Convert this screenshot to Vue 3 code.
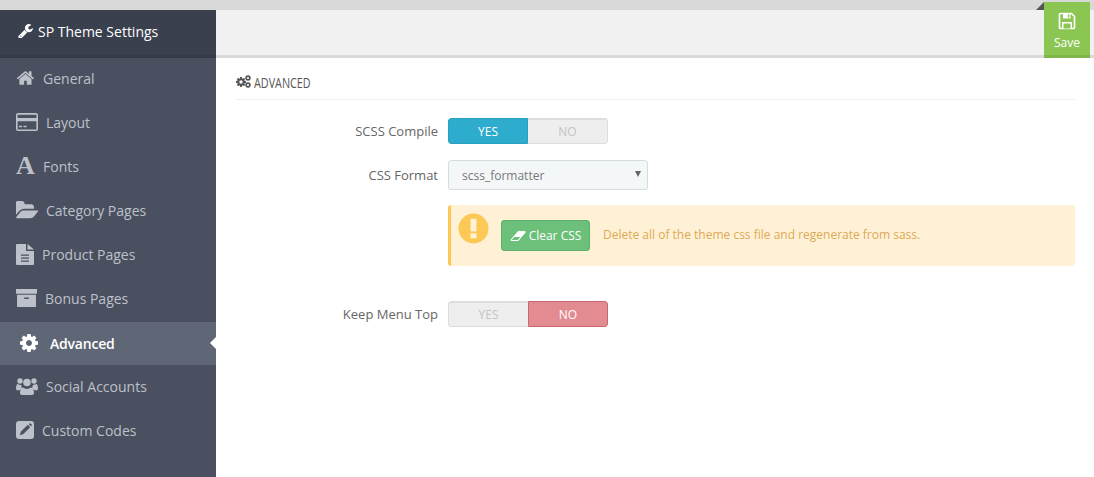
<script setup>
const items = [
  { label: 'General', icon: 'home', w: 19, gap: 8 },
  { label: 'Layout', icon: 'card', w: 22, gap: 8 },
  { label: 'Fonts', icon: 'font', w: 19, gap: 8 },
  { label: 'Category Pages', icon: 'folder', w: 22, gap: 8 },
  { label: 'Product Pages', icon: 'file', w: 18, gap: 8 },
  { label: 'Bonus Pages', icon: 'archive', w: 21, gap: 8 },
  { label: 'Advanced', icon: 'cog', w: 18, gap: 12, active: true, vb: '128 128 1536 1536' },
  { label: 'Social Accounts', icon: 'users', w: 22, gap: 8 },
  { label: 'Custom Codes', icon: 'pencil', w: 18, gap: 8 }
]
const cog = 'M1152 896q0-106-75-181t-181-75-181 75-75 181 75 181 181 75 181-75 75-181zm512-109v222q0 12-8 23t-20 13l-185 28q-19 54-39 91 35 50 107 138 10 12 10 25t-9 23q-27 37-99 108t-94 71q-12 0-26-9l-138-108q-44 23-91 38-16 136-29 186-7 28-36 28h-222q-14 0-24.5-8.5t-11.5-21.5l-28-184q-49-16-90-37l-141 107q-10 9-25 9-14 0-25-11-126-114-165-168-7-10-7-23 0-12 8-23 15-21 51-66.5t54-70.5q-27-50-41-99l-183-27q-13-2-21-12.5t-8-23.5v-222q0-12 8-23t19-13l186-28q14-46 39-92-40-57-107-138-10-12-10-24 0-10 9-23 26-36 98.5-107.5t94.5-71.5q13 0 26 10l138 107q44-23 91-38 16-136 29-186 7-28 36-28h222q14 0 24.5 8.5t11.5 21.5l28 184q49 16 90 37l142-107q9-9 24-9 13 0 25 10 129 119 165 170 7 8 7 22 0 12-8 23-15 21-51 66.5t-54 70.5q26 50 41 98l183 28q13 2 21 12.5t8 23.5z'
const paths = {
  home: 'M1472 992v480q0 26-19 45t-45 19h-384v-384h-256v384h-384q-26 0-45-19t-19-45v-480q0-1 .5-3t.5-3l575-474 575 474q1 2 1 6zm223-69l-62 74q-8 9-21 11h-3q-13 0-21-7l-692-577-692 577q-12 8-24 7-13-2-21-11l-62-74q-8-10-7-23.5t11-21.5l719-599q32-26 76-26t76 26l244 204v-195q0-14 9-23t23-9h192q14 0 23 9t9 23v408l219 182q10 8 11 21.5t-7 23.5z',
  folder: 'M1815 952q0 31-31 66l-336 396q-43 51-120.5 86.5t-143.5 35.5h-1088q-34 0-60.5-13t-26.5-43q0-31 31-66l336-396q43-51 120.5-86.5t143.5-35.5h1088q34 0 60.5 13t26.5 43zm-343-344v160h-832q-94 0-197 47.5t-164 119.5l-337 396-5 6q0-4-.5-12.5t-.5-12.5v-960q0-92 66-158t158-66h320q92 0 158 66t66 158v32h544q92 0 158 66t66 158z',
  cog
}
const wrench = 'M448 1472q0-26-19-45t-45-19-45 19-19 45 19 45 45 19 45-19 19-45zm644-420l-682 682q-37 37-90 37-52 0-91-37l-106-108q-38-36-38-90 0-53 38-91l681-681q39 98 114.5 173.5t173.5 114.5zm634-435q0 39-23 106-47 134-164.5 217.5t-258.5 83.5q-185 0-316.5-131.5t-131.5-316.5 131.5-316.5 316.5-131.5q58 0 121.5 16.5t107.5 46.5q16 11 16 28t-16 28l-293 169v224l193 107q5-3 79-48.5t135.5-81 70.5-35.5q15 0 23.5 10t8.500 25z'
const eraser = 'M960 1408l336-384h-768l-336 384h768zm1013-1077q15 34 9.5 71.5t-30.5 65.5l-896 1024q-38 44-96 44h-768q-38 0-69.5-20.5t-47.5-54.5q-15-34-9.5-71.5t30.5-65.5l896-1024q38-44 96-44h768q38 0 70 20.5t47 54.5z'
</script>

<template>
  <div class="page">
    <aside class="sidebar">
      <div class="brand">
        <svg class="wrench" viewBox="64 128 1664 1536"><path :d="wrench" fill="currentColor" /></svg>
        <span>SP Theme Settings</span>
      </div>
      <nav class="menu">
        <a v-for="item in items" :key="item.label" class="item" :class="{ active: item.active }">
          <span class="ico" :style="{ width: item.w + 'px', marginRight: item.gap + 'px' }">
            <svg v-if="paths[item.icon]" :viewBox="item.vb || '0 128 1800 1536'" class="fa"><path :d="paths[item.icon]" fill="currentColor" /></svg>
            <svg v-else-if="item.icon === 'users'" viewBox="0 0 22 17" class="fa">
              <g fill="currentColor">
                <circle cx="4" cy="3" r="2.700" />
                <circle cx="18" cy="3" r="2.700" />
                <circle cx="11" cy="4.500" r="3.800" />
                <path d="M0 11c0-3 .6-5 1.800-5 .8.500 1.700 1 3.500.9-.2 1.500.4 2.600 1.200 3.500-1.300.3-2.200 1-2.900 1.900H1.800C.8 12.300 0 12 0 11zM22 11c0-3-.6-5-1.800-5-.8.500-1.700 1-3.500.9.2 1.500-.4 2.600-1.200 3.500 1.300.3 2.200 1 2.900 1.900h1.800c1 0 1.800-.3 1.800-1.300z" />
                <path d="M7.300 9.600c1 .8 2.200 1.300 3.700 1.300s2.700-.5 3.700-1.300c2.300 0 3.300 3 3.300 5.400 0 1.300-.9 2-2.200 2H6.200C4.900 17 4 16.300 4 15c0-2.400 1-5.400 3.300-5.400z" />
              </g>
            </svg>
            <svg v-else-if="item.icon === 'card'" viewBox="0 0 22 18" class="fa">
              <path fill-rule="evenodd" fill="currentColor" d="M2 0h18a2 2 0 0 1 2 2v14a2 2 0 0 1-2 2H2a2 2 0 0 1-2-2V2a2 2 0 0 1 2-2zm-.4 1.800v3.200h18.800V1.800zm0 6.400v8.200h18.800V8.200zM3 12.800h3v1.400H3zm4.500 0h3v1.400h-3z" />
            </svg>
            <span v-else-if="item.icon === 'font'" class="a-glyph">A</span>
            <svg v-else-if="item.icon === 'file'" viewBox="0 0 18 21" class="fa">
              <path fill-rule="evenodd" fill="currentColor" d="M1 0h9v7h8v13a1 1 0 0 1-1 1H1a1 1 0 0 1-1-1V1a1 1 0 0 1 1-1zM5 10.500v1.300h8v-1.300zm0 3v1.300h8v-1.300zm0 3v1.300h8v-1.300zM11.500 0 18 5.600h-6.500z" />
            </svg>
            <svg v-else-if="item.icon === 'archive'" viewBox="0 0 20 18" class="fa">
              <path fill-rule="evenodd" fill="currentColor" d="M0 0h20v4.500H0zM1 5.500h18V17a1 1 0 0 1-1 1H2a1 1 0 0 1-1-1zM7.800 8v1.500h4.400V8z" />
            </svg>
            <svg v-else viewBox="0 0 18 18" class="fa">
              <path fill-rule="evenodd" fill="currentColor" d="M3 0h12a3 3 0 0 1 3 3v12a3 3 0 0 1-3 3H3a3 3 0 0 1-3-3V3a3 3 0 0 1 3-3zm8.800 3.800L5 10.600l-1.300 3.700 3.700-1.300 6.800-6.800zm1-.5 2 2 .9-.9a.6.6 0 0 0 0-.9l-1.100-1.100a.6.6 0 0 0-.9 0z" />
            </svg>
          </span>
          <span>{{ item.label }}</span>
        </a>
      </nav>
    </aside>

    <main class="main">
      <div class="toolbar">
        <button class="save">
          <svg viewBox="0 0 18 18" class="save-ico">
            <path fill="none" stroke="currentColor" stroke-width="1.700" d="M1.500 2.500a1 1 0 0 1 1-1h11l3 3v11a1 1 0 0 1-1 1h-13a1 1 0 0 1-1-1z" />
            <path fill="currentColor" d="M5 1.500h7.500v5H5zM4 10h10v6.500H4z" />
            <path fill="#8bc653" d="M5.500 11.500h7v5h-7zM9.800 2.500h1.500v3H9.800z" />
          </svg>
          <span>Save</span>
          <i class="fold"></i>
        </button>
      </div>

      <section class="content">
        <h3 class="title">
          <span class="cogs">
            <svg class="cog-big" viewBox="128 128 1536 1536"><path :d="cog" fill="currentColor" /></svg>
            <svg class="cog-s1" viewBox="128 128 1536 1536"><path :d="cog" fill="currentColor" /></svg>
            <svg class="cog-s2" viewBox="128 128 1536 1536"><path :d="cog" fill="currentColor" /></svg>
          </span>
          <span class="title-text">ADVANCED</span>
        </h3>

        <div class="row first">
          <label class="lbl">SCSS Compile</label>
          <div class="switch">
            <span class="opt on-yes">YES</span>
            <span class="opt off">NO</span>
          </div>
        </div>

        <div class="row second">
          <label class="lbl">CSS Format</label>
          <div class="select">
            <span>scss_formatter</span>
            <i class="caret"></i>
          </div>
        </div>

        <div class="alert">
          <svg class="warn" viewBox="0 0 32 32">
            <circle cx="16" cy="16" r="15.500" fill="#fdc956" />
            <rect x="13" y="6" width="6" height="13" fill="#fff2d9" />
            <rect x="13" y="21" width="6" height="5" fill="#fff2d9" />
          </svg>
          <button class="clear">
            <svg class="eraser" viewBox="0 128 2000 1536"><path :d="eraser" fill="currentColor" /></svg>
            <span>Clear CSS</span>
          </button>
          <span class="alert-text">Delete all of the theme css file and regenerate from sass.</span>
        </div>

        <div class="row third">
          <label class="lbl">Keep Menu Top</label>
          <div class="switch">
            <span class="opt off">YES</span>
            <span class="opt on-no">NO</span>
          </div>
        </div>
      </section>
    </main>
  </div>
</template>

<style>
html, body { margin: 0; background: #fff; overflow: hidden; }
</style>

<style scoped>
.page {
  display: flex;
  height: 477px;
  width: 1094px;
  padding-top: 10px;
  box-sizing: border-box;
  background: linear-gradient(#d9d9d9 10px, #fff 10px);
  font-family: "Open Sans", sans-serif;
  overflow: hidden;
}
.sidebar { width: 216px; flex: none; background: #4a5060; display: flex; flex-direction: column; }
.brand {
  height: 48px;
  box-sizing: border-box;
  background: #3a404e;
  border-bottom: 3px solid #363b48;
  color: #fff;
  font-size: 14px;
  font-weight: 400;
  display: flex;
  align-items: center;
  padding: 0 0 3px 18px;
}
.wrench { width: 15px; height: 14px; margin-right: 5px; }
.menu { display: flex; flex-direction: column; margin-top: -1px; }
.item {
  height: 44px;
  box-sizing: border-box;
  display: flex;
  align-items: center;
  padding: 0 0 2px 16px;
  color: #bdc1c9;
  font-size: 14px;
  position: relative;
}
.item.active {
  height: 43px;
  margin-top: 1px;
  padding: 0 0 1px 20px;
  background: #5f6676;
  color: #fff;
  font-weight: 600;
  letter-spacing: -0.2px;
}
.item.active::after {
  content: "";
  position: absolute;
  right: 0;
  top: 15px;
  border: 6px solid transparent;
  border-left: 0;
  border-right-color: #fff;
}
.ico { display: inline-flex; justify-content: center; align-items: center; height: 22px; flex: none; }
.fa { width: 100%; max-height: 21px; display: block; }
.a-glyph { font: 700 26px/22px "Liberation Serif", serif; }

.main { flex: 1; min-width: 0; display: flex; flex-direction: column; }
.toolbar { height: 48px; box-sizing: border-box; background: #f1f1f1; border-bottom: 3px solid #d9d9d9; position: relative; flex: none; }
.save {
  position: absolute;
  left: 828px;
  top: -8px;
  width: 46px;
  height: 56px;
  box-sizing: border-box;
  border: 0;
  border-bottom: 3px solid #7fb54b;
  background: #8bc653;
  color: #fff;
  font: 400 12px/16px "Open Sans", sans-serif;
  padding: 10px 0 0;
  display: flex;
  flex-direction: column;
  align-items: center;
  gap: 5px;
}
.save-ico { width: 18px; height: 18px; }
.fold {
  position: absolute;
  left: -8px;
  top: 0;
  border-style: solid;
  border-width: 0 0 8px 8px;
  border-color: transparent transparent #555 transparent;
}

.content { padding: 0 19px 0 20px; }
.title {
  margin: 0;
  height: 42px;
  box-sizing: border-box;
  border-bottom: 1px solid #eee;
  display: flex;
  align-items: center;
  color: #555;
  font-weight: 400;
  font-size: 15px;
  padding-top: 6px;
}
.cogs { position: relative; width: 15px; height: 13px; margin-right: 3px; flex: none; }
.cog-big { position: absolute; left: 0; top: 2px; width: 10px; height: 10px; }
.cog-s1 { position: absolute; left: 9px; top: 0; width: 6px; height: 6px; }
.cog-s2 { position: absolute; left: 9px; top: 7px; width: 6px; height: 6px; }
.title-text { display: inline-block; transform: scaleX(0.72); transform-origin: left center; white-space: nowrap; }

.row { display: flex; align-items: center; }
.first { margin-top: 18px; }
.second { margin-top: 16px; }
.third { margin-top: 35px; }
.lbl {
  width: 212px;
  padding-right: 10px;
  box-sizing: border-box;
  text-align: right;
  font-size: 13px;
  color: #666;
  flex: none;
}
.switch { display: flex; width: 160px; height: 26px; border-radius: 3px; overflow: hidden; flex: none; }
.opt {
  width: 80px;
  box-sizing: border-box;
  display: flex;
  align-items: center;
  justify-content: center;
  font-size: 12px;
}
.off { background: #eee; color: #c4c4c4; border: 1px solid #ddd; border-top-width: 2px; }
.off:first-child { border-right: 0; border-radius: 3px 0 0 3px; }
.off:last-child { border-left: 0; border-radius: 0 3px 3px 0; }
.on-yes { background: #2eacce; color: #fff; font-weight: 500; border: 1px solid #2aa0c0; border-radius: 3px 0 0 3px; }
.on-no { background: #e28b91; color: #fff; font-weight: 500; border: 1px solid #c8656d; border-radius: 0 3px 3px 0; }

.select {
  width: 200px;
  height: 30px;
  box-sizing: border-box;
  background: #f4f7f8;
  border: 1px solid #d3dcde;
  border-radius: 3px;
  display: flex;
  align-items: center;
  justify-content: space-between;
  padding: 0 6px 0 13px;
  font-size: 12px;
  color: #777;
}
.caret {
  border-style: solid;
  border-width: 6px 3px 0;
  border-color: #666 transparent transparent;
  margin-top: -2px;
}

.alert {
  margin: 15px 0 0 212px;
  height: 61px;
  box-sizing: border-box;
  background: #fff1d6;
  border-left: 3px solid #fdc956;
  border-radius: 3px;
  display: flex;
  align-items: flex-start;
  padding: 8px 0 0 7px;
}
.warn { width: 31px; height: 31px; flex: none; }
.clear {
  margin: 7px 0 0 12px;
  width: 89px;
  height: 31px;
  box-sizing: border-box;
  background: #6cc07a;
  border: 1px solid #5fb06e;
  border-radius: 3px;
  color: #fff;
  font: 400 12px "Open Sans", sans-serif;
  display: flex;
  align-items: center;
  justify-content: center;
  gap: 3px;
  padding: 0;
  flex: none;
}
.eraser { width: 16px; height: 12px; }
.alert-text { margin: 13px 0 0 13px; font-size: 12px; color: #dda957; white-space: nowrap; }
</style>
